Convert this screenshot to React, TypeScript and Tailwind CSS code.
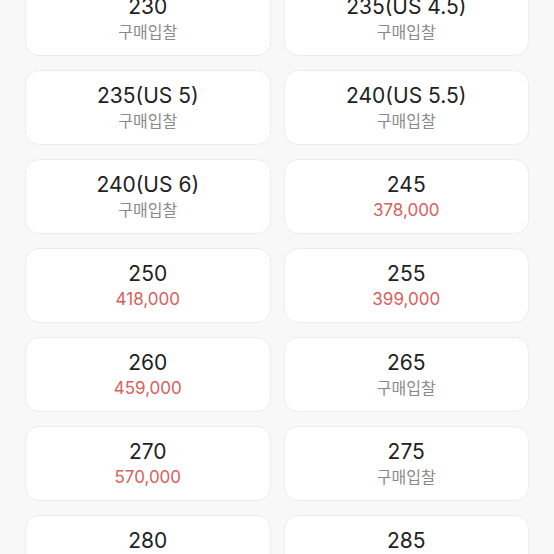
type SizeItem = { size: string; price?: string };

const sizes: SizeItem[] = [
  { size: "230" },
  { size: "235(US 4.5)" },
  { size: "235(US 5)" },
  { size: "240(US 5.5)" },
  { size: "240(US 6)" },
  { size: "245", price: "378,000" },
  { size: "250", price: "418,000" },
  { size: "255", price: "399,000" },
  { size: "260", price: "459,000" },
  { size: "265" },
  { size: "270", price: "570,000" },
  { size: "275" },
  { size: "280" },
  { size: "285" },
];

const SizeCard = ({ item }: { item: SizeItem }) => {
  return (
    <div className="h-[75px] rounded-[14px] border border-[#ececec] bg-white flex flex-col items-center pt-[11px]">
      <div className="text-[21px] leading-[28px] text-[#222222]">{item.size}</div>
      <div
        className={
          item.price
            ? "text-[17px] leading-[22px] text-[#d9605c]"
            : "text-[16px] leading-[22px] text-[#8a8a8a]"
        }
      >
        {item.price ?? "구매입찰"}
      </div>
    </div>
  );
};

export default function App() {
  return (
    <div
      className="h-[554px] overflow-hidden bg-[#f8f8f8]"
      style={{ fontFamily: "Inter, 'Noto Sans CJK KR', sans-serif" }}
    >
      <div className="-mt-[19px] px-[25px] grid grid-cols-2 gap-x-[13px] gap-y-[14px]">
        {sizes.map((item, index) => (
          <SizeCard key={item.size + index} item={item} />
        ))}
      </div>
    </div>
  );
}
